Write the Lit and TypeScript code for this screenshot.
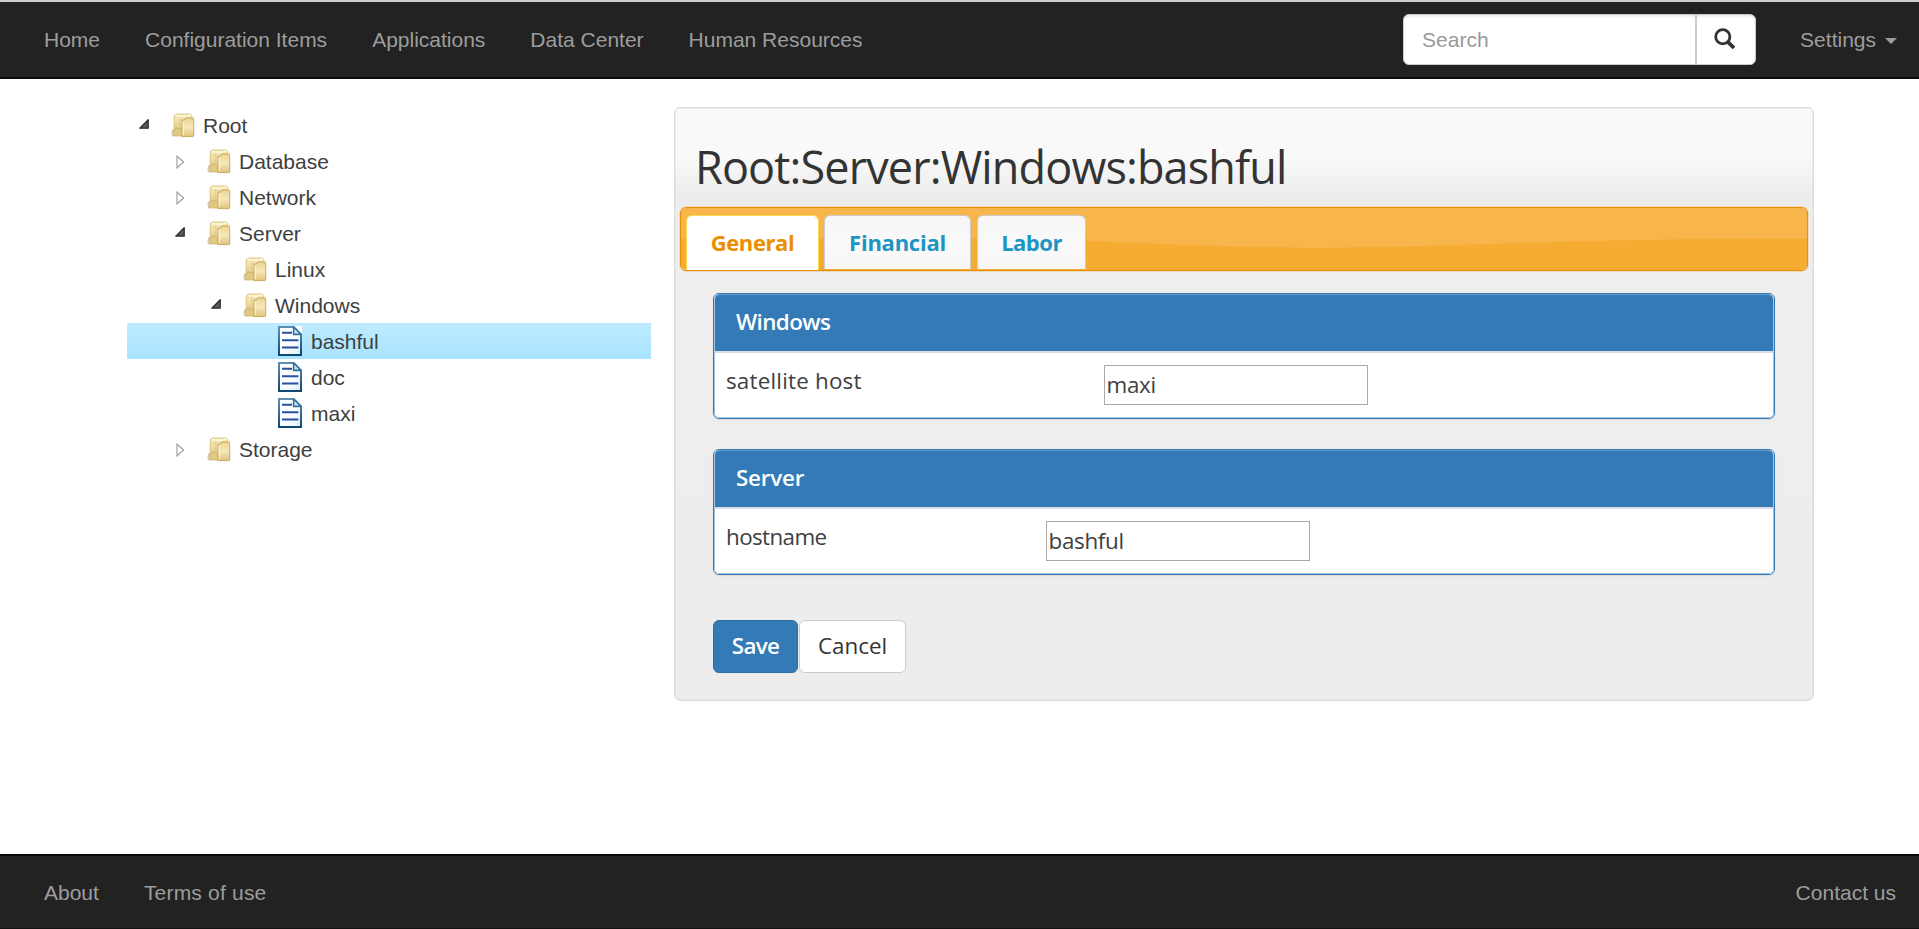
import { LitElement, html, css } from "lit";
import { customElement, property } from "lit/decorators.js";
import { classMap } from "lit/directives/class-map.js";

interface TreeNode {
  label: string;
  depth: number;
  kind: "folder" | "file";
  toggle?: "open" | "closed";
  selected?: boolean;
}

const NODES: TreeNode[] = [
  { label: "Root", depth: 0, kind: "folder", toggle: "open" },
  { label: "Database", depth: 1, kind: "folder", toggle: "closed" },
  { label: "Network", depth: 1, kind: "folder", toggle: "closed" },
  { label: "Server", depth: 1, kind: "folder", toggle: "open" },
  { label: "Linux", depth: 2, kind: "folder" },
  { label: "Windows", depth: 2, kind: "folder", toggle: "open" },
  { label: "bashful", depth: 3, kind: "file", selected: true },
  { label: "doc", depth: 3, kind: "file" },
  { label: "maxi", depth: 3, kind: "file" },
  { label: "Storage", depth: 1, kind: "folder", toggle: "closed" },
];

const folderIcon = html`<svg width="24" height="25" viewBox="0 0 24 25">
  <defs>
    <linearGradient id="fa" x1="0" y1="0" x2="0" y2="1">
      <stop offset="0" stop-color="#f6eab9" />
      <stop offset=".5" stop-color="#eedb9f" />
      <stop offset="1" stop-color="#dcc27c" />
    </linearGradient>
    <linearGradient id="fb" x1="0" y1="0" x2="0" y2="1">
      <stop offset="0" stop-color="#ecd596" />
      <stop offset=".5" stop-color="#f5e8b8" />
      <stop offset="1" stop-color="#dec27b" />
    </linearGradient>
  </defs>
  <path d="M2.4 16Q-.2 19.5 2 22.6" fill="none" stroke="#d2d2d2" stroke-width="1.2" />
  <path d="M3.2 18V3L4.8 1h14.6l1.4 1.4V20H3.2z" fill="url(#fa)" stroke="#d6bd76" stroke-width=".8" />
  <path d="M4.6 2.6 12 3.4 19.8 2.2" fill="none" stroke="#fffae2" stroke-width="1.3" />
  <path d="M8.8 4v12" stroke="#dcc583" stroke-width=".8" />
  <path d="M2 17.2l1.2-.8h1.6v-1.2h3.4v1.2h3V23H2z" fill="#e2c982" stroke="#cdb069" stroke-width=".7" />
  <path d="M11 7h2.6l1-2h7.2q.9 0 .9.9V22.6q0 1-1 1H11z" fill="url(#fb)" stroke="#c4a356" stroke-width=".9" />
  <path d="M12.2 8.4v14" stroke="#fff6d2" stroke-width="1" />
</svg>`;

const fileIcon = html`<svg width="24" height="30" viewBox="0 0 24 30">
  <defs>
    <linearGradient id="pg" x1="0" y1="0" x2="1" y2="1">
      <stop offset="0" stop-color="#fff" />
      <stop offset=".6" stop-color="#fafdff" />
      <stop offset="1" stop-color="#dcecf6" />
    </linearGradient>
    <linearGradient id="pe" x1="0" y1="0" x2="0" y2="1">
      <stop offset="0" stop-color="#5d8fb4" />
      <stop offset="1" stop-color="#0f4773" />
    </linearGradient>
  </defs>
  <path d="M15 0h9v9z" fill="#fff" />
  <path d="M1 1h14.6l7.4 7.6v20.4H1z" fill="url(#pg)" stroke="url(#pe)" stroke-width="2" />
  <path d="M15.6 1v7.4h7.6z" fill="#cfe3f0" stroke="#33729d" stroke-width="1.6" />
  <path d="M4 6.8h10M4 14.2h16.4M4 21.6h16.4" stroke="#2a4f9e" stroke-width="2" />
</svg>`;

const openArrow = html`<svg width="10" height="10" viewBox="0 0 10 10">
  <path d="M9.2.8v8.4H.8z" fill="#595959" stroke="#2e2e2e" stroke-width="1.3" stroke-linejoin="round" />
</svg>`;

const closedArrow = html`<svg width="9" height="14" viewBox="0 0 9 14">
  <path d="M1 1.2v11.6L7.6 7z" fill="#fff" stroke="#a6a6a6" stroke-width="1.3" />
</svg>`;

@customElement("nav-tree")
class NavTree extends LitElement {
  static styles = css`
    :host {
      display: block;
      font: 21px/36px "Liberation Sans", Arial, sans-serif;
      color: #404040;
    }
    .row {
      display: flex;
      align-items: center;
      height: 36px;
    }
    .row.selected {
      background: linear-gradient(#beebff, #a8e4ff);
    }
    .indent {
      flex: none;
    }
    .toggle {
      width: 32px;
      height: 36px;
      flex: none;
      display: flex;
    }
    .toggle svg {
      margin: 12px 0 0 0.5px;
    }
    .toggle.closed svg {
      margin: 12px 0 0 2px;
    }
    .icon {
      width: 33px;
      flex: none;
      display: flex;
      align-items: center;
      margin-left: 1px;
    }
    .icon.file svg {
      margin-left: -1px;
    }
    .label {
      padding-top: 1px;
      line-height: 35px;
      margin-left: -1px;
    }
  `;

  render() {
    return NODES.map(
      (n) => html`<div class=${classMap({ row: true, selected: !!n.selected })}>
        <span class="indent" style="width:${11 + n.depth * 36}px"></span>
        <span class=${classMap({ toggle: true, closed: n.toggle === "closed" })}>
          ${n.toggle === "open" ? openArrow : n.toggle === "closed" ? closedArrow : ""}
        </span>
        <span class=${classMap({ icon: true, [n.kind]: true })}>
          ${n.kind === "folder" ? folderIcon : fileIcon}
        </span>
        <span class="label">${n.label}</span>
      </div>`
    );
  }
}

@customElement("field-panel")
class FieldPanel extends LitElement {
  @property() heading = "";
  @property() label = "";
  @property() value = "";
  @property({ type: Number }) labelWidth = 300;
  @property({ type: Number }) headingSpacing = 0;
  @property({ type: Number }) labelSpacing = 0;

  static styles = css`
    :host {
      display: block;
      box-sizing: border-box;
      height: 126px;
      border: 1px solid #337ab7;
      border-radius: 6px;
      background: #fff;
      box-shadow: 0 1px 2px rgba(0, 0, 0, 0.08);
      overflow: hidden;
      color: #404040;
      font: 22.4px/30px "Open Sans", sans-serif;
    }
    .frame {
      box-sizing: border-box;
      height: 124px;
      border: 1px solid #a3c3de;
      border-top-color: #6a9cc8;
      border-radius: 5px;
      overflow: hidden;
    }
    .heading {
      box-sizing: border-box;
      height: 58px;
      padding: 12px 21px 0 21px;
      background: #337ab7;
      border-bottom: 2px solid #d9dde8;
      color: #fff;
      font-weight: 600;
    }
    .body {
      display: flex;
      padding: 12px 0 0 11px;
    }
    .label {
      padding-top: 1px;
    }
    .input {
      box-sizing: border-box;
      width: 264px;
      height: 40px;
      border: 1px solid #a9a9a9;
      padding: 4px 0 0 1.5px;
      letter-spacing: -0.3px;
    }
  `;

  render() {
    return html`
      <div class="frame">
        <div class="heading" style="letter-spacing:${this.headingSpacing}px">${this.heading}</div>
        <div class="body">
          <div class="label" style="width:${this.labelWidth}px;letter-spacing:${this.labelSpacing}px">
            ${this.label}
          </div>
          <div class="input">${this.value}</div>
        </div>
      </div>
    `;
  }
}

@customElement("app-root")
class AppRoot extends LitElement {
  static styles = css`
    :host {
      display: flex;
      flex-direction: column;
      box-sizing: border-box;
      width: 100%;
      height: 100vh;
      overflow: hidden;
      background: #fff;
      font-family: "Liberation Sans", Arial, sans-serif;
      font-size: 21px;
      color: #333;
    }
    .topbar {
      box-sizing: border-box;
      height: 79px;
      flex: none;
      display: flex;
      align-items: flex-start;
      padding: 12px 22px 0 44px;
      background: #222;
      border-top: 2px solid #cdd1d1;
      border-bottom: 2px solid #080808;
      color: #9d9d9d;
    }
    .links {
      display: flex;
      gap: 45px;
      line-height: 51px;
      flex: 1;
      white-space: nowrap;
    }
    .search {
      box-sizing: border-box;
      width: 353px;
      height: 51px;
      display: flex;
      background: #fff;
      border: 1.5px solid #ccc;
      border-radius: 6px;
      box-shadow: inset 0 2px 2px rgba(0, 0, 0, 0.08);
      color: #999;
      line-height: 49px;
    }
    .query {
      flex: 1;
      padding-left: 18px;
    }
    .go {
      width: 60px;
      border-left: 2px solid #ccc;
      display: flex;
      align-items: center;
      padding: 0 0 2px 17px;
      box-sizing: border-box;
    }
    .settings {
      margin-left: 44px;
      display: flex;
      align-items: center;
      gap: 9px;
      line-height: 51px;
    }
    .caret {
      border: 6px solid transparent;
      border-top-color: #9d9d9d;
      border-bottom: 0;
      margin-top: 2px;
    }
    .main {
      flex: 1;
      min-height: 0;
      display: flex;
      align-items: flex-start;
      padding: 28px 0 0 127px;
    }
    nav-tree {
      width: 524px;
      margin-right: 23px;
    }
    .panel {
      box-sizing: border-box;
      width: 1140px;
      height: 594px;
      border: 1px solid #ddd;
      border-radius: 6px;
      box-shadow: inset 0 0 0 1px rgba(221, 221, 221, 0.5);
      background: linear-gradient(
        #f9f9f9 0,
        #f9f9f9 48px,
        #ececec 88px,
        #eee 100px,
        #ededed 100%
      );
      padding: 0 5px;
    }
    .title {
      font: 45px/60px "Open Sans", sans-serif;
      padding: 29px 0 0 15px;
      height: 99px;
      box-sizing: border-box;
      letter-spacing: -0.87px;
      white-space: nowrap;
    }
    .tabs {
      box-sizing: border-box;
      height: 64px;
      display: flex;
      position: relative;
      gap: 5px;
      padding: 7px 0 0 5px;
      border: 1px solid #e78f08;
      border-radius: 6px;
      box-shadow: 0 0 0 0.5px rgba(231, 143, 8, 0.4);
    }
    .gloss {
      position: absolute;
      inset: 0;
      width: 100%;
      height: 100%;
      border-radius: 5px;
    }
    .tab {
      box-sizing: border-box;
      position: relative;
      height: 54px;
      border: 1.5px solid #ccc;
      border-bottom: 0;
      border-radius: 6px 6px 0 0;
      background: linear-gradient(#f6f6f6, #fafafa 60%, #f5f5f5);
      color: #1c94c4;
      font: 700 22px/52px "Open Sans", sans-serif;
      text-align: center;
      letter-spacing: -0.4px;
    }
    .tab.active {
      height: 55px;
      background: #fff;
      border-color: #fbd850;
      color: #eb8f00;
    }
    .t1 {
      width: 133px;
    }
    .tab.t2 {
      width: 147px;
      letter-spacing: -0.25px;
    }
    .tab.t3 {
      width: 109px;
      margin-left: 1px;
      letter-spacing: -0.5px;
    }
    .content {
      display: flex;
      flex-direction: column;
      gap: 30px;
      padding: 22px 33px 0 33px;
    }
    .actions {
      display: flex;
      gap: 1px;
      margin-top: 15px;
    }
    .btn {
      box-sizing: border-box;
      height: 53px;
      border: 1.5px solid #ccc;
      border-radius: 6px;
      background: #fff;
      color: #333;
      font: 22.4px/50px "Open Sans", sans-serif;
      text-align: center;
      width: 107px;
      letter-spacing: 0;
    }
    .btn.primary {
      width: 85px;
      background: #337ab7;
      border-color: #2e6da4;
      color: #fff;
      font-weight: 600;
      letter-spacing: -0.7px;
    }
    .footer {
      box-sizing: border-box;
      height: 75px;
      flex: none;
      display: flex;
      justify-content: space-between;
      padding: 12px 23px 0 44px;
      background: #222;
      border-top: 2px solid #080808;
      border-bottom: 1px solid #111;
      color: #9d9d9d;
      line-height: 50px;
    }
    .footer .links {
      line-height: 50px;
    }
    .terms {
      letter-spacing: 0.2px;
    }
  `;

  render() {
    return html`
      <div class="topbar">
        <div class="links">
          <span>Home</span><span>Configuration Items</span><span>Applications</span
          ><span>Data Center</span><span>Human Resources</span>
        </div>
        <div class="search">
          <span class="query">Search</span>
          <span class="go">
            <svg width="22" height="22" viewBox="0 0 22 22" fill="none" stroke="#333">
              <circle cx="8.8" cy="8.8" r="7.1" stroke-width="2.8" />
              <path d="M13.8 13.8 20 20" stroke-width="3.8" />
            </svg>
          </span>
        </div>
        <div class="settings"><span>Settings</span><span class="caret"></span></div>
      </div>
      <div class="main">
        <nav-tree></nav-tree>
        <div class="panel">
          <div class="title">Root:Server:Windows:bashful</div>
          <div class="tabs">
            <svg class="gloss" viewBox="0 0 1126 61" preserveAspectRatio="none">
              <rect width="1126" height="61" fill="#f6ac32" />
              <path d="M0 0H1126V30C870 30 770 39 640 39C500 39 420 30 280 30H0Z" fill="#f8b54c" />
            </svg>
            <div class="tab active t1">General</div>
            <div class="tab t2">Financial</div>
            <div class="tab t3">Labor</div>
          </div>
          <div class="content">
            <field-panel
              heading="Windows"
              label="satellite host"
              value="maxi"
              .labelWidth=${378}
              .headingSpacing=${-0.6}
              .labelSpacing=${0.2}
            ></field-panel>
            <field-panel
              heading="Server"
              label="hostname"
              value="bashful"
              .labelWidth=${320}
              .headingSpacing=${-0.2}
              .labelSpacing=${-0.6}
            ></field-panel>
            <div class="actions">
              <div class="btn primary">Save</div>
              <div class="btn">Cancel</div>
            </div>
          </div>
        </div>
      </div>
      <div class="footer">
        <div class="links"><span>About</span><span class="terms">Terms of use</span></div>
        <span>Contact us</span>
      </div>
    `;
  }
}
